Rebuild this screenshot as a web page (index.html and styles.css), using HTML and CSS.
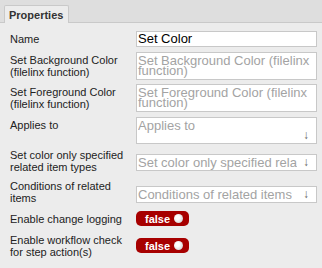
FILE: index.html
```html
<!DOCTYPE html>
<html>
<head>
<meta charset="utf-8">
<link rel="stylesheet" href="styles.css">
</head>
<body>
<div class="tabs">
  <div class="tab">Properties</div>
</div>
<div class="form">
  <div class="row mid">
    <div class="label">Name</div>
    <div class="field"><div class="input value">Set Color</div></div>
  </div>
  <div class="row gap5">
    <div class="label">Set Background Color (filelinx function)</div>
    <div class="field"><div class="input ph two">Set Background Color (filelinx function)</div></div>
  </div>
  <div class="row gap4">
    <div class="label">Set Foreground Color (filelinx function)</div>
    <div class="field"><div class="input ph two">Set Foreground Color (filelinx function)</div></div>
  </div>
  <div class="row gap5">
    <div class="label">Applies to</div>
    <div class="field"><div class="input ph area"><span class="txt">Applies to</span><span class="arrow">↓</span></div></div>
  </div>
  <div class="row gap5 selrow">
    <div class="label">Set color only specified related item types</div>
    <div class="field sel5"><div class="input ph sel"><span class="txt">Set color only specified rela</span><span class="arrow">↓</span></div></div>
  </div>
  <div class="row gap7 selrow">
    <div class="label">Conditions of related items</div>
    <div class="field sel6"><div class="input ph sel"><span class="txt">Conditions of related items</span><span class="arrow">↓</span></div></div>
  </div>
  <div class="row gap7 togrow">
    <div class="label single">Enable change logging</div>
    <div class="field"><div class="toggle">false<span class="knob"></span></div></div>
  </div>
  <div class="row gap8 togrow">
    <div class="label">Enable workflow check for step action(s)</div>
    <div class="field tog4"><div class="toggle">false<span class="knob"></span></div></div>
  </div>
</div>
</body>
</html>
```
FILE: styles.css
```css
html, body {
  margin: 0;
  padding: 0;
  background: #ececec;
  font-family: "Liberation Sans", Arial, sans-serif;
  color: #222;
}
.tabs {
  background: #dedede;
  height: 22px;
  border-bottom: 1px solid #c9c9c9;
  padding-left: 4px;
  display: flex;
  align-items: flex-end;
}
.tab {
  height: 17px;
  margin-bottom: -1px;
  padding: 0 5px 0 4px;
  background: #ececec;
  border: 1px solid #c9c9c9;
  border-bottom: none;
  border-radius: 2px 2px 0 0;
  font-size: 11px;
  font-weight: bold;
  color: #333;
  line-height: 18px;
}
.form {
  padding: 8px 5px 0 10px;
  display: flex;
  flex-direction: column;
}
.row {
  display: grid;
  grid-template-columns: 126px minmax(0, 1fr);
  font-size: 11px;
  align-items: start;
}
.gap4 { margin-top: 4px; }
.gap5 { margin-top: 5px; }
.gap7 { margin-top: 7px; }
.gap8 { margin-top: 8px; }
.row.mid {
  align-items: center;
}
.label {
  line-height: 12px;
  padding-top: 2px;
  padding-right: 4px;
}
.row.mid .label,
.selrow .label,
.togrow .label {
  padding-top: 0;
}
.togrow .label.single {
  padding-top: 2px;
}
.field { min-width: 0; }
.sel5 { margin-top: 5px; }
.sel6 { margin-top: 6px; }
.tog4 { margin-top: 4px; }
.input {
  background: #fff;
  border: 1px solid #c8c8c8;
  font-size: 13px;
  padding: 0 2px 0 1px;
  box-sizing: border-box;
}
.value { color: #000; height: 16px; line-height: 14px; }
.ph { color: #a3a3a3; }
.two { height: 28px; line-height: 10px; padding-top: 3px; }
.area {
  height: 27px;
  display: flex;
  justify-content: space-between;
  align-items: flex-start;
  line-height: 14px;
  padding-top: 1px;
}
.area .arrow { align-self: flex-end; }
.sel {
  height: 17px;
  line-height: 15px;
  display: flex;
  justify-content: space-between;
  white-space: nowrap;
}
.arrow {
  color: #666;
  font-size: 12px;
  line-height: 15px;
  padding: 0 5px 0 3px;
  flex: none;
}
.txt { overflow: hidden; white-space: nowrap; min-width: 0; }
.toggle {
  display: flex;
  align-items: center;
  gap: 4px;
  height: 15px;
  width: 53px;
  box-sizing: border-box;
  padding-left: 9px;
  background: #a70000;
  border-radius: 5px;
  color: #fff;
  font-weight: bold;
  font-size: 11px;
}
.knob {
  width: 9px;
  height: 9px;
  border-radius: 50%;
  background: radial-gradient(circle at 40% 40%, #fff 25%, #c4c4c4);
}
```
